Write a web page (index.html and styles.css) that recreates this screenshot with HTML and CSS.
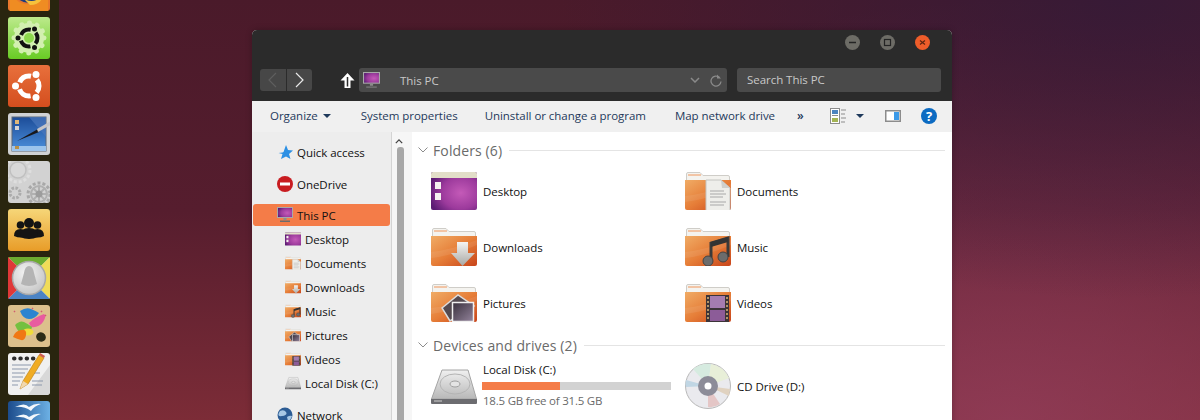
FILE: index.html
```html
<!DOCTYPE html>
<html lang="en">
<head>
    <meta charset="UTF-8">
    <meta name="viewport" content="width=device-width, initial-scale=1.0">
    <title>This PC</title>
    <link rel="stylesheet" href="styles.css">
</head>
<body>
    <!-- shared gradients and file icons -->
    <svg class="defs" xmlns="http://www.w3.org/2000/svg">
        <defs>
            <linearGradient id="gFolder" x1="0" y1="0" x2="1" y2="1">
                <stop offset="0" stop-color="#f0ac66"/>
                <stop offset="0.5" stop-color="#e67e38"/>
                <stop offset="1" stop-color="#c8441a"/>
            </linearGradient>
            <radialGradient id="gPurple" cx="0.65" cy="0.55" r="0.7">
                <stop offset="0" stop-color="#c45ab8"/>
                <stop offset="0.6" stop-color="#9c3a9c"/>
                <stop offset="1" stop-color="#5c1c74"/>
            </radialGradient>
            <linearGradient id="gArrow" x1="0" y1="0" x2="0" y2="1">
                <stop offset="0" stop-color="#f4f4f2"/>
                <stop offset="1" stop-color="#a8a8a4"/>
            </linearGradient>
            <linearGradient id="gDisk" x1="0" y1="0" x2="0" y2="1">
                <stop offset="0" stop-color="#f0f0f0"/>
                <stop offset="1" stop-color="#b8b8b8"/>
            </linearGradient>
            <linearGradient id="gPhoto" x1="0" y1="0" x2="1" y2="1">
                <stop offset="0" stop-color="#38303c"/>
                <stop offset="1" stop-color="#94849c"/>
            </linearGradient>
            <linearGradient id="gGreen" x1="0" y1="0" x2="0" y2="1">
                <stop offset="0" stop-color="#bdea8c"/>
                <stop offset="1" stop-color="#68cc24"/>
            </linearGradient>
            <linearGradient id="gOrange" x1="0" y1="0" x2="0" y2="1">
                <stop offset="0" stop-color="#e8703c"/>
                <stop offset="1" stop-color="#d44e1e"/>
            </linearGradient>
            <linearGradient id="gScreen" x1="0" y1="0" x2="0" y2="1">
                <stop offset="0" stop-color="#1c4c98"/>
                <stop offset="1" stop-color="#4c90dc"/>
            </linearGradient>
            <linearGradient id="gYellow" x1="0" y1="0" x2="0" y2="1">
                <stop offset="0" stop-color="#f6d678"/>
                <stop offset="1" stop-color="#e89c28"/>
            </linearGradient>
            <linearGradient id="gOffice" x1="0" y1="0" x2="1" y2="0">
                <stop offset="0" stop-color="#1c4c8c"/>
                <stop offset="1" stop-color="#6cb0e4"/>
            </linearGradient>
            <radialGradient id="gSilver" cx="0.4" cy="0.35" r="0.7">
                <stop offset="0" stop-color="#f4f4f4"/>
                <stop offset="1" stop-color="#c4c4c4"/>
            </radialGradient>

            <symbol id="folder" viewBox="0 0 46 38">
                <path d="M1.500 2q0-1.500 1.500-1.500h12l3 3h25q1.500 0 1.500 1.500v6h-43z" fill="#f4f3ef" stroke="#cfcdc8"/>
                <path d="M3 3h13" stroke="#f0965c" stroke-width="1"/>
                <path d="M0 8h46v28q0 2-2 2H2q-2 0-2-2z" fill="url(#gFolder)"/>
                <path d="M0 24q20-2 46-12v5Q20 28 0 30z" fill="#fff" opacity=".08"/>
            </symbol>
            <symbol id="i-desktop" viewBox="0 0 46 38">
                <rect width="46" height="38" rx="2" fill="url(#gPurple)"/>
                <path d="M0 6V2q0-2 2-2h42q2 0 2 2v4z" fill="#e2dec8"/>
                <rect x="4" y="10" width="6" height="7" fill="#f4f0f0"/>
                <rect x="4" y="21" width="6" height="7" fill="#f4f0f0"/>
            </symbol>
            <symbol id="i-docs" viewBox="0 0 46 38">
                <use href="#folder"/>
                <path d="M21 8h15l9 8v24H21z" fill="#eeeeea" stroke="#c4c4c0"/>
                <path d="M36 8l1 8h8z" fill="#d0d0cc"/>
                <path d="M25 19h14M25 22h16M25 25h13M25 30h16M25 33h14" stroke="#a8a8a8"/>
            </symbol>
            <symbol id="i-down" viewBox="0 0 46 38">
                <use href="#folder"/>
                <path d="M26 14h11v11h7L31.500 38 20 25h6z" fill="url(#gArrow)"/>
            </symbol>
            <symbol id="i-music" viewBox="0 0 46 38">
                <use href="#folder"/>
                <path d="M26 32V15l17-5v19" fill="none" stroke="#3a3a3a" stroke-width="3"/>
                <path d="M26 14l17-5v5l-17 5z" fill="#333"/>
                <circle cx="23" cy="33" r="5" fill="#6c6c6c" stroke="#444"/>
                <circle cx="38" cy="29" r="5" fill="#6c6c6c" stroke="#444"/>
            </symbol>
            <symbol id="i-pics" viewBox="0 0 46 38">
                <use href="#folder"/>
                <path d="M11 24L27 11l16 11-24 15z" fill="#544a50" stroke="#dcdcdc" stroke-width="1.500"/>
                <rect x="21.500" y="18.500" width="21" height="19" fill="url(#gPhoto)" stroke="#f0f0f0" stroke-width="1.500"/>
            </symbol>
            <symbol id="i-video" viewBox="0 0 46 38">
                <use href="#folder"/>
                <rect x="21" y="11" width="23" height="27" fill="#3c3438"/>
                <rect x="25" y="12" width="15" height="12" fill="#a47cb0"/>
                <rect x="25" y="26" width="15" height="11" fill="#8c5c98"/>
                <path d="M23 13v24M42 13v24" stroke="#b09468" stroke-width="2" stroke-dasharray="2 2"/>
            </symbol>
            <symbol id="i-disk" viewBox="0 0 46 38">
                <path d="M11 3h26l8.500 29H.5z" fill="url(#gDisk)" stroke="#a4a4a4"/>
                <ellipse cx="24" cy="17" rx="15" ry="10" fill="none" stroke="#b4b4b4"/>
                <ellipse cx="24" cy="17" rx="5" ry="3" fill="#e4e4e4" stroke="#a0a0a0"/>
                <path d="M0 32h46v4q0 1-1 1H1q-1 0-1-1z" fill="#6c6c70"/>
                <path d="M3 34h8" stroke="#d0d0d0"/>
            </symbol>
            <symbol id="i-pc" viewBox="0 0 16 16">
                <rect x=".5" y=".5" width="15" height="10" fill="url(#gPurple)" stroke="#a8a8a8"/>
                <path d="M6.500 11h3v2h-3z" fill="#8c8c8c"/>
                <path d="M3 13.500h10V15H3z" fill="#6c6c6c"/>
            </symbol>
        </defs>
    </svg>

    <div class="desktop">
        <div class="launcher">
            <svg class="tile" viewBox="0 0 42 42">
                <rect width="42" height="42" rx="3" fill="#e8782c"/>
                <circle cx="21" cy="18" r="16" fill="#1f3c7c"/>
                <path d="M2 22q10 20 30 10 6-4 8-14v24H2z" fill="#ef8c22"/>
                <path d="M16 30q12 6 20-6-2 12-14 12z" fill="#f6c23c"/>
            </svg>
            <svg class="tile" viewBox="0 0 42 42">
                <rect width="42" height="42" rx="3" fill="url(#gGreen)"/>
                <circle cx="21" cy="21" r="15" fill="#d2f0b0"/>
                <circle cx="21" cy="21" r="15" fill="none" stroke="#d2f0b0" stroke-width="5" stroke-linecap="round" stroke-dasharray=".1 7.750"/>
                <circle cx="21" cy="21" r="5" fill="#8cd84c"/>
                <circle cx="21" cy="21" r="8.500" fill="none" stroke="#111" stroke-width="4" stroke-dasharray="12 5.800" stroke-dashoffset="6"/>
                <circle cx="10" cy="21" r="2.500" fill="#111"/>
                <circle cx="26.500" cy="12" r="2.500" fill="#111"/>
                <circle cx="26.500" cy="30.500" r="2.500" fill="#111"/>
            </svg>
            <svg class="tile" viewBox="0 0 42 42">
                <rect width="42" height="42" rx="3" fill="url(#gOrange)"/>
                <circle cx="21" cy="21" r="10" fill="none" stroke="#fff" stroke-width="5" stroke-dasharray="14 6.940" stroke-dashoffset="7"/>
                <circle cx="7.500" cy="21" r="3.500" fill="#fff"/>
                <circle cx="28" cy="9.500" r="3.500" fill="#fff"/>
                <circle cx="28" cy="32.500" r="3.500" fill="#fff"/>
            </svg>
            <svg class="tile" viewBox="0 0 42 42">
                <rect width="42" height="42" rx="3" fill="#d0d2d4"/>
                <rect x="4" y="4" width="34" height="34" fill="url(#gScreen)" stroke="#5c6878"/>
                <path d="M21 4h17v20z" fill="#4a78bc" opacity=".7"/>
                <rect x="4" y="33" width="34" height="5" fill="#9cc4ec"/>
                <rect x="7" y="7" width="4" height="4" fill="#e0b878"/>
                <rect x="7" y="13" width="4" height="4" fill="#d4d4d4"/>
                <rect x="7" y="33" width="4" height="3" fill="#b89048"/>
                <path d="M9 28L30 16l1 3z" fill="#18181c"/>
                <path d="M29 16l14-8 1 3-14 8z" fill="#c4c4c8"/>
            </svg>
            <svg class="tile" viewBox="0 0 42 42">
                <rect width="42" height="42" rx="3" fill="#d2d2d2"/>
                <circle cx="10" cy="9" r="12" fill="none" stroke="#dedede" stroke-width="3" stroke-dasharray="3 2"/>
                <circle cx="10" cy="9" r="8" fill="#d8d8d8" stroke="#c0c0c0" stroke-width="1.500"/>
                <circle cx="31" cy="33" r="11" fill="none" stroke="#a8a8a8" stroke-width="3" stroke-dasharray="3 2"/>
                <circle cx="31" cy="33" r="8" fill="none" stroke="#b0b0b0" stroke-width="2"/>
                <path d="M31 25v16M23 33h16M25 27l12 12M37 27L25 39" stroke="#b0b0b0" stroke-width="2"/>
                <circle cx="31" cy="33" r="3.500" fill="#9c9c9c"/>
                <circle cx="7" cy="32" r="5" fill="none" stroke="#acacac" stroke-width="3" stroke-dasharray="2.500 1.400"/>
            </svg>
            <svg class="tile" viewBox="0 0 42 42">
                <rect width="42" height="42" rx="3" fill="url(#gYellow)"/>
                <g fill="#141414">
                    <circle cx="12.500" cy="16" r="3.800"/>
                    <circle cx="29.500" cy="16" r="3.800"/>
                    <path d="M6 27q0-7 6.500-7t6.500 7q-6 3-13 0zM23 27q0-7 6.500-7T36 27q-6 3-13 0z"/>
                    <circle cx="21" cy="14" r="5"/>
                    <path d="M12 28q0-9 9-9t9 9q-9 4-18 0z"/>
                </g>
            </svg>
            <svg class="tile" viewBox="0 0 42 42">
                <rect width="42" height="42" rx="3" fill="#e8e8e8"/>
                <path d="M0 0h42L21 21z" fill="#6cac30"/>
                <path d="M42 0v42L21 21z" fill="#f0dc58"/>
                <path d="M0 42h42L21 21z" fill="#4c84c4"/>
                <path d="M0 0v42L21 21z" fill="#e03838"/>
                <circle cx="21" cy="21" r="16.500" fill="url(#gSilver)" stroke="#a8a8a8" stroke-width="1.500"/>
                <path d="M21 9q4 0 5 7l3 11q-8 4-16 0l3-11q1-7 5-7z" fill="#b4b4b4"/>
            </svg>
            <svg class="tile" viewBox="0 0 42 42">
                <rect width="42" height="42" rx="3" fill="#dcc08c"/>
                <path d="M12 6q6-4 11-2t8 4q-4 6-10 6t-9-8z" fill="#2c84d0"/>
                <path d="M21 18q6-6 15-9 3 2-1 8t-12 5z" fill="#e85ca0"/>
                <path d="M7 20q5-5 9-3t8 5q-1 6-7 7t-10-9z" fill="#74c040"/>
                <ellipse cx="20" cy="27" rx="5.500" ry="3.500" fill="#f0dc3c"/>
                <path d="M5 32q2-6 8-7t5 5-5 5-8-3z" fill="#f07814"/>
                <ellipse cx="33" cy="32" rx="5" ry="4.500" fill="#2c2c18" transform="rotate(30 33 32)"/>
                <path d="M33 6l1 1M37 10l1 1M24 3l1 1M6 6l1 1" stroke="#d05c70" stroke-width="1.500"/>
            </svg>
            <svg class="tile" viewBox="0 0 42 42">
                <rect width="42" height="42" rx="3" fill="#f0f0f0"/>
                <path d="M42 12v26q0 4-4 4H20z" fill="#d8d8d8"/>
                <path d="M6 5.500h24" stroke="#2c2c2c" stroke-width="4" stroke-linecap="round" stroke-dasharray=".5 5.800"/>
                <path d="M4 12h19M4 16h16M4 20h13M4 24h11M4 28h8M4 32h6M26 20h6M24 28h11M24 32h10" stroke="#8c98ac"/>
                <path d="M12 36l3-8L31 2l5 3-16 26z" fill="#f0ac24" stroke="#b87c14" stroke-width=".6"/>
                <path d="M12 36l3-8 5 3z" fill="#f0d8b0"/>
                <path d="M31 2l1-2 5 3-1 2z" fill="#d05c50"/>
            </svg>
            <svg class="tile" viewBox="0 0 42 42">
                <rect width="42" height="42" rx="3" fill="url(#gOffice)"/>
                <path d="M7 6q10-5 14 0 6-4 12-3-7 2-10 7-7-5-16-4z" fill="#f4f8fc"/>
                <path d="M7 16q10-5 14 0 6-4 12-3-7 2-10 7-7-5-16-4z" fill="#f4f8fc"/>
            </svg>
        </div>

        <div class="window">
            <div class="chrome">
                <div class="caption">
                    <svg class="cap-btn" viewBox="0 0 15 15">
                        <circle cx="7.500" cy="7.500" r="7.500" fill="#6d6c66"/>
                        <path d="M4 7.500h7" stroke="#242424" stroke-width="1.500"/>
                    </svg>
                    <svg class="cap-btn" viewBox="0 0 15 15">
                        <circle cx="7.500" cy="7.500" r="7.500" fill="#6d6c66"/>
                        <rect x="4.500" y="4.500" width="6" height="6" fill="none" stroke="#242424" stroke-width="1.200"/>
                    </svg>
                    <svg class="cap-btn" viewBox="0 0 15 15">
                        <circle cx="7.500" cy="7.500" r="7.500" fill="#ee5d2a"/>
                        <path d="M5 5.500l5 4M10 5.500l-5 4" stroke="#5c2410" stroke-width="1.200"/>
                    </svg>
                </div>
                <div class="navbar">
                    <div class="nav-group">
                        <span class="nav-btn">
                            <svg width="9" height="16" viewBox="0 0 9 16"><path d="M8 1L1 8l7 7" fill="none" stroke="#5e5e5e" stroke-width="1.200"/></svg>
                        </span>
                        <span class="nav-btn">
                            <svg width="9" height="16" viewBox="0 0 9 16"><path d="M1 1l7 7-7 7" fill="none" stroke="#e8e8e8" stroke-width="1.200"/></svg>
                        </span>
                    </div>
                    <svg class="up-arrow" width="15" height="15" viewBox="0 0 15 15">
                        <path d="M7.500 0l7 7.500h-4V15h-6V7.500h-4z" fill="#fff"/>
                        <path d="M7.500 4v9.500" stroke="#2b2b2b" stroke-width="1.500"/>
                    </svg>
                    <div class="address">
                        <svg class="addr-pc" width="17" height="17"><use href="#i-pc"/></svg>
                        <span class="addr-text">This PC</span>
                        <svg class="addr-chev" width="10" height="6" viewBox="0 0 10 6"><path d="M1 1l4 4 4-4" fill="none" stroke="#8a8a8a" stroke-width="1.500"/></svg>
                        <svg class="addr-refresh" width="12" height="13" viewBox="0 0 12 13"><path d="M9.500 3.500a5 5 0 1 0 1.500 4" fill="none" stroke="#8a8a8a" stroke-width="1.300"/><path d="M7 .5v4h4z" fill="#8a8a8a"/></svg>
                    </div>
                    <div class="search">Search This PC</div>
                </div>
            </div>

            <div class="toolbar">
                <span class="tool">Organize<i class="caret"></i></span>
                <span class="tool tool-sys">System properties</span>
                <span class="tool tool-prog">Uninstall or change a program</span>
                <span class="tool">Map network drive</span>
                <span class="tool more">»</span>
                <div class="tool-right">
                    <svg width="16" height="16" viewBox="0 0 16 16">
                        <rect x=".5" y=".5" width="9" height="15" fill="#fff" stroke="#8c8c8c"/>
                        <rect x="2" y="2" width="6" height="4" fill="#4c84c0"/>
                        <rect x="2" y="7" width="6" height="1" fill="#8c8c8c"/>
                        <rect x="2" y="10" width="6" height="4" fill="#a4b454"/>
                        <path d="M11 2h5M11 6h4M11 10h5M11 14h4" stroke="#8c8c8c"/>
                    </svg>
                    <i class="caret view-caret"></i>
                    <svg class="preview" width="16" height="12" viewBox="0 0 16 12">
                        <rect x=".75" y=".75" width="14.500" height="10.500" fill="#fff" stroke="#8c8c8c" stroke-width="1.500"/>
                        <rect x="9" y="2" width="5" height="8" fill="#3c9ae8"/>
                    </svg>
                    <span class="help">?</span>
                </div>
            </div>

            <div class="panes">
                <nav class="sidebar">
                    <div class="side-item">
                        <svg class="side-icon" width="16" height="16" viewBox="0 0 16 16"><path d="M9 1l2 5 5 .5-4 3.500 1.500 5L9 12.500 4 15l1.500-5-4-1 4-.5 1-.5z" fill="#2c90e4"/></svg>
                        Quick access
                    </div>
                    <div class="side-item">
                        <svg class="side-icon" width="16" height="16" viewBox="0 0 16 16"><circle cx="8" cy="8" r="8" fill="#c81c20"/><rect x="3" y="6.500" width="10" height="3" fill="#fff"/></svg>
                        OneDrive
                    </div>
                    <div class="side-item selected">
                        <svg class="side-icon" width="16" height="16"><use href="#i-pc"/></svg>
                        This PC
                    </div>
                    <div class="side-child"><svg class="child-icon" width="16" height="14"><use href="#i-desktop"/></svg>Desktop</div>
                    <div class="side-child"><svg class="child-icon" width="16" height="14"><use href="#i-docs"/></svg>Documents</div>
                    <div class="side-child"><svg class="child-icon" width="16" height="14"><use href="#i-down"/></svg>Downloads</div>
                    <div class="side-child"><svg class="child-icon" width="16" height="14"><use href="#i-music"/></svg>Music</div>
                    <div class="side-child"><svg class="child-icon" width="16" height="14"><use href="#i-pics"/></svg>Pictures</div>
                    <div class="side-child"><svg class="child-icon" width="16" height="14"><use href="#i-video"/></svg>Videos</div>
                    <div class="side-child"><svg class="child-icon" width="16" height="14"><use href="#i-disk"/></svg>Local Disk (C:)</div>
                    <div class="side-item">
                        <svg class="side-icon" width="16" height="16" viewBox="0 0 16 16"><circle cx="8" cy="8" r="7.500" fill="#2c5c94"/><path d="M3 4q4-2 6 1T5 9 3 4zM10 10q3-2 5-1-1 4-4 5z" fill="#a8c8e4"/></svg>
                        Network
                    </div>
                </nav>
                <div class="scrollbar">
                    <svg class="scroll-up" width="8" height="5" viewBox="0 0 8 5"><path d="M.5 4.500L4 1l3.500 3.500" fill="none" stroke="#444" stroke-width="1.400"/></svg>
                    <div class="scroll-thumb"></div>
                </div>

                <main class="content">
                    <div class="group-head">
                        <svg width="10" height="6" viewBox="0 0 10 6"><path d="M.5.500L5 5 9.500.5" fill="none" stroke="#8c8c8c"/></svg>
                        <span>Folders (6)</span>
                        <div class="group-rule"></div>
                    </div>
                    <div class="grid">
                        <div class="entry"><svg class="entry-icon" width="46" height="38"><use href="#i-desktop"/></svg>Desktop</div>
                        <div class="entry"><svg class="entry-icon" width="46" height="38"><use href="#i-docs"/></svg>Documents</div>
                        <div class="entry"><svg class="entry-icon" width="46" height="38"><use href="#i-down"/></svg>Downloads</div>
                        <div class="entry"><svg class="entry-icon" width="46" height="38"><use href="#i-music"/></svg>Music</div>
                        <div class="entry"><svg class="entry-icon" width="46" height="38"><use href="#i-pics"/></svg>Pictures</div>
                        <div class="entry"><svg class="entry-icon" width="46" height="38"><use href="#i-video"/></svg>Videos</div>
                    </div>
                    <div class="group-head second">
                        <svg width="10" height="6" viewBox="0 0 10 6"><path d="M.5.500L5 5 9.500.5" fill="none" stroke="#8c8c8c"/></svg>
                        <span>Devices and drives (2)</span>
                        <div class="group-rule"></div>
                    </div>
                    <div class="grid">
                        <div class="entry">
                            <svg class="entry-icon" width="46" height="38"><use href="#i-disk"/></svg>
                            <div class="drive">
                                <div>Local Disk (C:)</div>
                                <div class="bar"><div class="bar-fill" style="width: 41.300%"></div></div>
                                <div class="drive-free">18.5 GB free of 31.5 GB</div>
                            </div>
                        </div>
                        <div class="entry">
                            <svg class="entry-icon" width="46" height="46" viewBox="0 0 46 46">
                                <circle cx="23" cy="23" r="22.500" fill="#eaeaee" stroke="#b8b8b8"/>
                                <path d="M23 23L8 6q8-6 18-5z" fill="#d6ebe0"/>
                                <path d="M23 23L26 1q12 2 18 14z" fill="#e8efd8"/>
                                <path d="M23 23l22 3-1 7z" fill="#e0d2c0"/>
                                <path d="M23 23l12 18q-6 4-12 3z" fill="#e4c6c6"/>
                                <path d="M23 23L1 17q-1 4 0 7z" fill="#c0d6e4"/>
                                <circle cx="23" cy="23" r="10" fill="#8c8c98"/>
                                <circle cx="23" cy="23" r="3.500" fill="#fff"/>
                            </svg>
                            CD Drive (D:)
                        </div>
                    </div>
                </main>
            </div>
        </div>
    </div>
</body>
</html>
```

FILE: styles.css
```css
body {
    margin: 0;
    font-family: "Open Sans", "Noto Sans", sans-serif;
    font-size: 11.5px;
    letter-spacing: -0.04px;
    color: #111;
}
.defs {
    display: block;
    width: 0;
    height: 0;
}
.desktop {
    display: flex;
    height: 420px;
    overflow: hidden;
    background:
        radial-gradient(ellipse 560px 300px at 1120px 0, rgba(52, 26, 56, 0.85), transparent),
        radial-gradient(ellipse 620px 420px at 1010px 420px, rgba(150, 64, 96, 0.7), transparent),
        linear-gradient(180deg, #4a1a2a 0%, #561d2e 50%, #7c2c37 100%);
}
.launcher {
    flex: none;
    width: 59px;
    height: 420px;
    box-sizing: border-box;
    padding: 0 0 0 8px;
    background: #29250f;
    display: flex;
    flex-direction: column;
    gap: 6px;
}
.tile {
    flex: none;
    width: 42px;
    height: 42px;
}
.tile:first-child {
    margin-top: -31px;
}
.window {
    flex: none;
    width: 700px;
    height: 420px;
    margin: 30px 0 0 193px;
    border-radius: 5px 5px 0 0;
    background: #fff;
    overflow: hidden;
    box-shadow: 0 0 6px rgba(0, 0, 0, 0.25);
}
.chrome {
    background: #2b2b2b;
    padding: 5px 11px 9px 8px;
}
.caption {
    display: flex;
    justify-content: flex-end;
    gap: 20px;
    height: 16px;
    margin: 0 11px 17px 0;
}
.cap-btn {
    width: 15px;
    height: 15px;
}
.navbar {
    display: flex;
    align-items: center;
    height: 24px;
}
.nav-group {
    display: flex;
    width: 52px;
    height: 22px;
    background: #474747;
    border-radius: 3px;
}
.nav-btn {
    flex: 1;
    display: flex;
    align-items: center;
    justify-content: center;
}
.nav-btn + .nav-btn {
    border-left: 1px solid #2b2b2b;
}
.up-arrow {
    margin: 0 4px 0 28px;
}
.address {
    flex: none;
    width: 368px;
    height: 24px;
    background: #4a4a4a;
    border-radius: 3px;
    display: flex;
    align-items: center;
    color: #c8c8c8;
}
.addr-pc {
    margin-left: 4px;
}
.addr-text {
    margin-left: 20px;
    flex: 1;
}
.addr-chev {
    margin-right: 10px;
}
.addr-refresh {
    margin-right: 5px;
}
.search {
    flex: none;
    width: 194px;
    height: 24px;
    line-height: 24px;
    margin-left: 10px;
    padding-left: 10px;
    background: #4a4a4a;
    border-radius: 3px;
    color: #c8c8c8;
}
.toolbar {
    box-sizing: border-box;
    height: 31px;
    background: #f0f0f0;
    display: flex;
    align-items: center;
    gap: 30px;
    padding: 0 15px 2px 18px;
    color: #1e395b;
}
.tool {
    white-space: nowrap;
}
.tool-sys {
    margin-right: -3px;
}
.tool-prog {
    margin-right: -1px;
}
.caret {
    display: inline-block;
    width: 0;
    height: 0;
    margin-left: 5px;
    vertical-align: 2px;
    border-left: 4px solid transparent;
    border-right: 4px solid transparent;
    border-top: 4px solid #1e395b;
}
.more {
    margin: 0 -12px 0 -8px;
    font-size: 12px;
    font-weight: 600;
}
.tool-right {
    margin-left: auto;
    display: flex;
    align-items: center;
}
.view-caret {
    margin-left: 10px;
    vertical-align: 0;
}
.preview {
    margin-left: 21px;
}
.help {
    width: 16px;
    height: 16px;
    line-height: 16px;
    margin-left: 20px;
    border-radius: 50%;
    background: #0c6bc2;
    color: #fff;
    text-align: center;
    font-weight: 700;
    font-size: 13px;
}
.panes {
    display: flex;
    height: 288px;
}
.sidebar {
    flex: none;
    width: 139px;
    padding-top: 8px;
    background: #ededed;
    border-right: 1px solid #d4d4d4;
}
.side-item {
    height: 24px;
    margin-bottom: 8px;
    padding-left: 25px;
    display: flex;
    align-items: center;
    gap: 4px;
}
.selected {
    height: 22px;
    margin: 1px;
    padding-left: 24px;
    background: #f47c48;
    border-radius: 3px;
}
.side-child {
    height: 24px;
    padding-left: 33px;
    display: flex;
    align-items: center;
    gap: 4px;
}
.side-child:nth-last-child(2) {
    margin-bottom: 8px;
}
.scrollbar {
    flex: none;
    width: 20px;
    background: #f6f6f6;
    display: flex;
    flex-direction: column;
}
.scroll-up {
    margin: 7px 0 3px 3px;
}
.scroll-thumb {
    width: 7px;
    height: 300px;
    margin-left: 5px;
    background: #a8a8a8;
    border-radius: 3px 3px 0 0;
}
.content {
    flex: 1;
    padding: 5px 7px 0 6px;
}
.group-head {
    height: 26px;
    display: flex;
    align-items: center;
    gap: 5px;
    font-size: 14px;
    letter-spacing: 0.12px;
    color: #6a6a6a;
}
.group-head.second {
    margin-top: 1px;
}
.group-rule {
    flex: 1;
    height: 1px;
    margin-left: 2px;
    background: #e4e4e4;
}
.grid {
    display: grid;
    grid-template-columns: 254px 254px;
    padding-left: 14px;
}
.entry {
    height: 56px;
    display: flex;
    align-items: center;
    gap: 6px;
}
.entry-icon {
    margin-left: -1px;
}
.drive {
    display: flex;
    flex-direction: column;
    line-height: 16px;
}
.bar {
    width: 189px;
    height: 8px;
    margin: 4px 0 3px -1px;
    background: #d2d2d2;
}
.bar-fill {
    height: 100%;
    background: #f47c48;
}
.drive-free {
    padding-bottom: 1px;
    letter-spacing: -0.22px;
    color: #6a6a6a;
}
```
